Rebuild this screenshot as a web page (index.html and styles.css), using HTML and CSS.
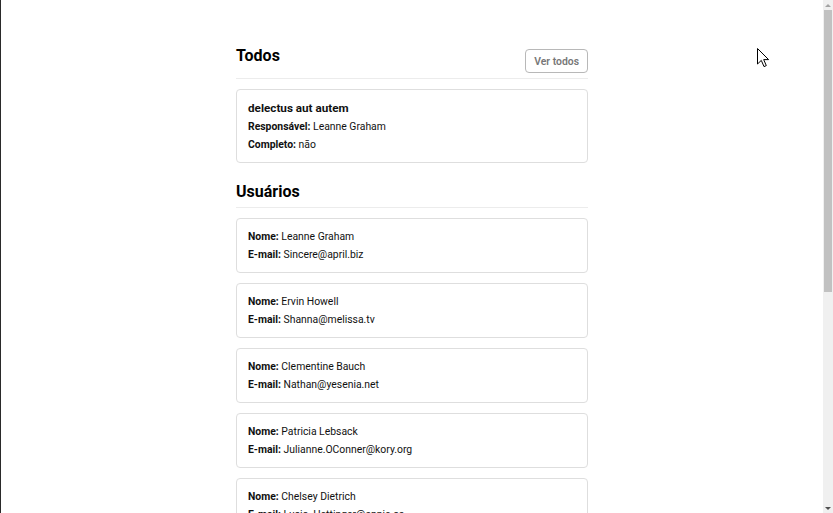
FILE: index.html
```html
<!DOCTYPE html>
<html lang="pt-BR">
<head>
<meta charset="utf-8">
<title>Todos e Usuários</title>
<link rel="stylesheet" href="styles.css">
</head>
<body>
<div class="window">
  <div class="viewport">
    <main class="container">
      <section class="section">
        <header class="section-head">
          <h2 class="section-title">Todos</h2>
          <button class="btn">Ver todos</button>
        </header>
        <div class="card card-todo">
          <div class="card-title">delectus aut autem</div>
          <div class="line"><b>Responsável:</b> Leanne Graham</div>
          <div class="line"><b>Completo:</b> não</div>
        </div>
      </section>
      <section class="section section-users">
        <header class="section-head">
          <h2 class="section-title">Usuários</h2>
        </header>
        <div class="list">
          <div class="card">
            <div class="line"><b>Nome:</b> Leanne Graham</div>
            <div class="line"><b>E-mail:</b> Sincere@april.biz</div>
          </div>
          <div class="card">
            <div class="line"><b>Nome:</b> Ervin Howell</div>
            <div class="line"><b>E-mail:</b> Shanna@melissa.tv</div>
          </div>
          <div class="card">
            <div class="line"><b>Nome:</b> Clementine Bauch</div>
            <div class="line"><b>E-mail:</b> Nathan@yesenia.net</div>
          </div>
          <div class="card">
            <div class="line"><b>Nome:</b> Patricia Lebsack</div>
            <div class="line"><b>E-mail:</b> Julianne.OConner@kory.org</div>
          </div>
          <div class="card">
            <div class="line"><b>Nome:</b> Chelsey Dietrich</div>
            <div class="line"><b>E-mail:</b> Lucio_Hettinger@annie.ca</div>
          </div>
        </div>
      </section>
    </main>
  </div>
  <div class="scrollbar">
    <div class="sb-arrow sb-up"></div>
    <div class="sb-track"><div class="sb-thumb"></div></div>
    <div class="sb-arrow sb-down"></div>
  </div>
  <svg class="cursor" width="13" height="20" viewBox="0 0 13 20" xmlns="http://www.w3.org/2000/svg">
    <path d="M0.5 0.5 L0.5 16 L4.3 12.4 L7 18.6 L9.3 17.6 L6.7 11.6 L11.6 11.6 Z" fill="#fff" stroke="#000" stroke-width="1" stroke-linejoin="miter"/>
  </svg>
</div>
</body>
</html>
```

FILE: styles.css
```css
html, body {
  margin: 0;
  padding: 0;
  height: 100%;
  overflow: hidden;
  background: #fff;
}

body {
  font-family: Roboto, "Liberation Sans", Arial, sans-serif;
  color: #111;
}

.window {
  position: relative;
  display: flex;
  height: 513px;
}

.viewport {
  flex: 1;
  border-left: 1px solid #2a2a2a;
  overflow: hidden;
}

.container {
  width: 352px;
  margin: 0 auto;
  padding-top: 45px;
}

.section-users {
  margin-top: 18px;
}

.section-head {
  display: flex;
  justify-content: space-between;
  align-items: flex-start;
  padding-bottom: 5px;
  border-bottom: 1px solid #ececec;
  margin-bottom: 10px;
}

.section-title {
  margin: 0;
  font-size: 16px;
  line-height: 21px;
  font-weight: 700;
  color: #000;
}

.btn {
  margin-top: 4px;
  height: 24px;
  padding: 0 8px;
  border: 1px solid #b8b8b8;
  border-radius: 4px;
  background: #fff;
  color: #777;
  font-family: Roboto, "Liberation Sans", Arial, sans-serif;
  font-size: 10.4px;
  font-weight: 600;
}

.list {
  display: flex;
  flex-direction: column;
  gap: 10px;
}

.card {
  border: 1px solid #dedede;
  border-radius: 4px;
  padding: 9px 11px 8px;
  font-size: 10.4px;
  line-height: 18px;
}

.card-title {
  font-size: 11.7px;
  font-weight: 700;
  line-height: 19px;
}

.line b {
  font-weight: 700;
}

.scrollbar {
  width: 10px;
  display: flex;
  flex-direction: column;
  background: #f0f0f0;
}

.sb-arrow {
  height: 10px;
  display: flex;
  align-items: center;
  justify-content: center;
}

.sb-up::before {
  content: "";
  border-left: 3px solid transparent;
  border-right: 3px solid transparent;
  border-bottom: 3px solid #a3a3a3;
}

.sb-down::before {
  content: "";
  border-left: 3px solid transparent;
  border-right: 3px solid transparent;
  border-top: 3px solid #505050;
}

.sb-track {
  flex: 1;
  padding: 0 1px;
}

.sb-thumb {
  height: 282px;
  background: #c1c1c1;
}

.cursor {
  position: absolute;
  left: 757px;
  top: 48px;
}
```
